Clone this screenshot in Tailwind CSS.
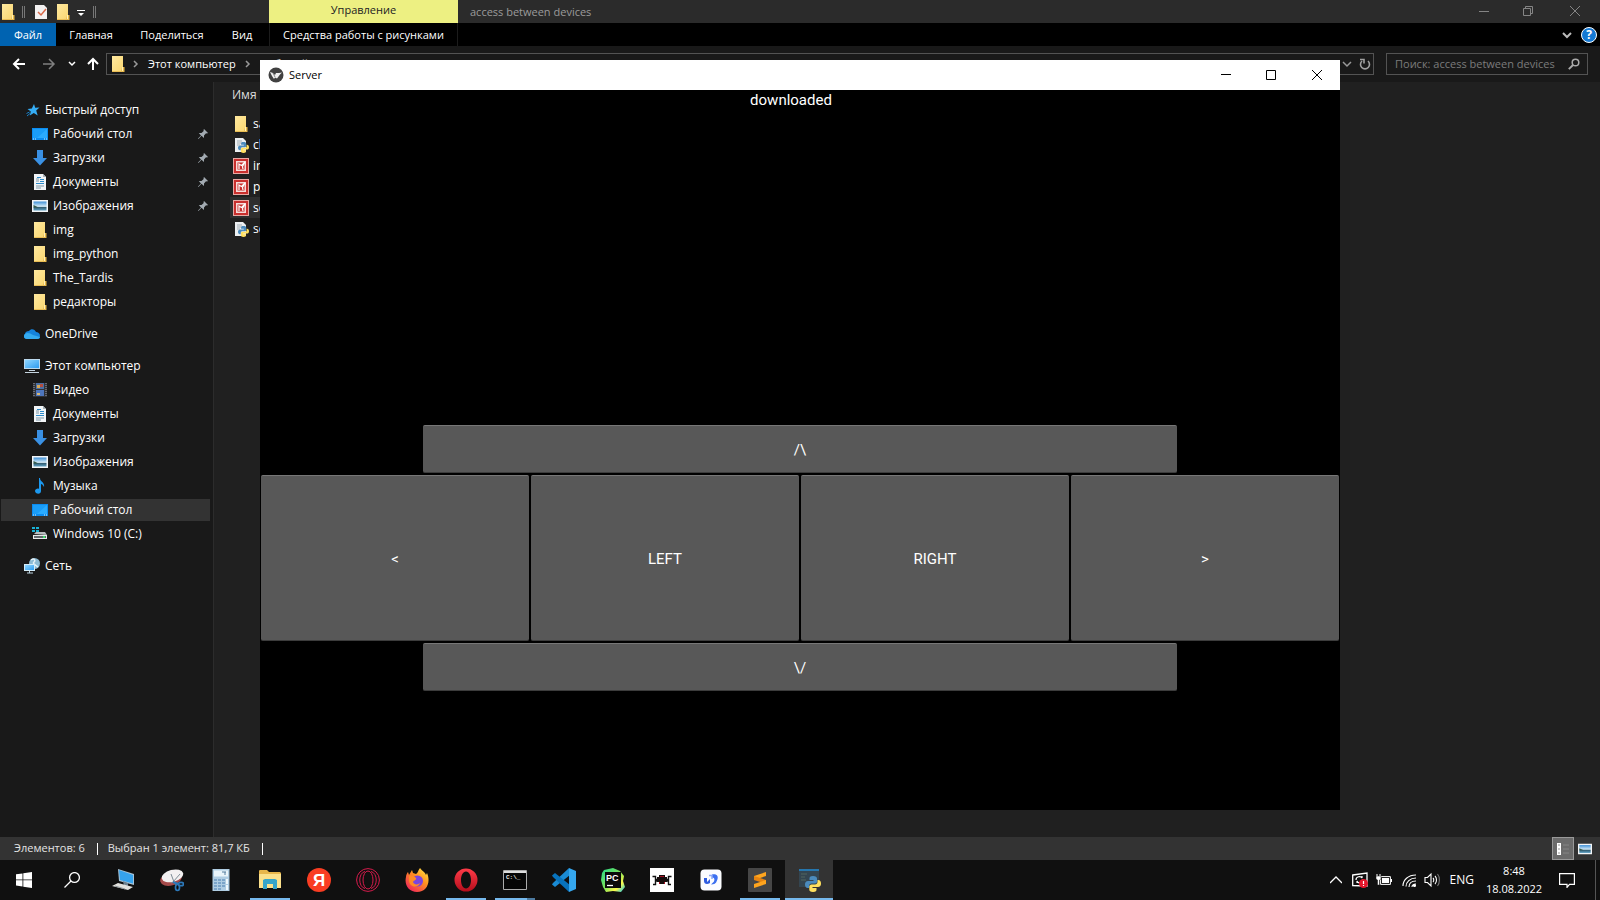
<!DOCTYPE html>
<html lang="ru">
<head>
<meta charset="utf-8">
<title>access between devices</title>
<script src="https://cdn.jsdelivr.net/npm/@tailwindcss/browser@4"></script>
</head>
<body class="relative flex h-screen flex-col overflow-hidden bg-[#202020] font-['Open_Sans','Noto_Sans',sans-serif] text-xs text-white">

<svg class="absolute h-0 w-0" aria-hidden="true">
  <defs>
    <linearGradient id="gFolder" x1="0" y1="0" x2="1" y2="1"><stop offset="0" stop-color="#ffe9a0"/><stop offset="1" stop-color="#f9d56d"/></linearGradient>
    <linearGradient id="gSky" x1="0" y1="0" x2="0" y2="1"><stop offset="0" stop-color="#3d8fd6"/><stop offset=".55" stop-color="#d6ecf8"/><stop offset=".6" stop-color="#2c5468"/><stop offset="1" stop-color="#5fa2c4"/></linearGradient>
    <linearGradient id="gScreen" x1="0" y1="0" x2="1" y2="1"><stop offset="0" stop-color="#8fd6ff"/><stop offset="1" stop-color="#2f9cf0"/></linearGradient>
    <linearGradient id="gFox" x1="1" y1="0" x2=".2" y2="1"><stop offset="0" stop-color="#fff04a"/><stop offset=".45" stop-color="#ff9320"/><stop offset="1" stop-color="#f0225c"/></linearGradient>
    <linearGradient id="gOpera" x1="0" y1="0" x2="0" y2="1"><stop offset="0" stop-color="#ff3b48"/><stop offset="1" stop-color="#b40e1c"/></linearGradient>
    <linearGradient id="gCharm" x1="0" y1="0" x2="1" y2="1"><stop offset="0" stop-color="#21d789"/><stop offset=".5" stop-color="#7fe35a"/><stop offset=".75" stop-color="#fcf84a"/><stop offset="1" stop-color="#07c3f2"/></linearGradient>
  </defs>
  <symbol id="folder" viewBox="0 0 16 16"><path d="M2 0h11v11h1v5H2z" fill="url(#gFolder)"/><path d="M12 11h2.500v5H11z" fill="#e9b94a"/><path d="M12 11h1v4h-1z" fill="#fff2bd"/><path d="M2 15h10v1H2z" fill="#e9bd55"/></symbol>
  <symbol id="star" viewBox="0 0 16 16"><path d="M9 2l1.200 3.800 4.300-.2-3.300 3 1.500 4.800-3.900-2.500L4.800 13.500l1-4L2.500 7l4.300-.5z" fill="#35adf5"/><path d="M1.500 11.500l3-1.500M2 14l3-2.500" stroke="#1780c8"/></symbol>
  <symbol id="desktop" viewBox="0 0 16 16"><path d="M0 2h16v12H0z" fill="#0b8cf0"/><path d="M1 3h14v9H1z" fill="#1a9df8"/><path d="M15 3v9H5z" fill="#2aabff"/><path d="M1 13h1m1 0h1m8 0h1m1 0h1" stroke="#d7efff"/></symbol>
  <symbol id="down" viewBox="0 0 16 16"><path d="M5 0h6v8h4l-7 7.500L1 8h4z" fill="#3a91e4"/></symbol>
  <symbol id="doc" viewBox="0 0 16 16"><path d="M2 0h9l3 3v13H2z" fill="#f2f5f7"/><path d="M11 0l3 3h-3z" fill="#a8b4bc"/><path d="M4 5h3M4 7h3M4 12h8M4 14h5" stroke="#7f98a8"/><path d="M5 3.500h4M8 5.500h4M8 7.500h4M4 9.500h8" stroke="#2e8bc9"/></symbol>
  <symbol id="image" viewBox="0 0 16 16"><path d="M0 2h16v12H0z" fill="#f3f5f7"/><path d="M1.500 3.500h13v9h-13z" fill="url(#gSky)"/><path d="M1.500 7l5 2.500H1.500z" fill="#375d4a"/></symbol>
  <symbol id="cloud" viewBox="0 0 16 16"><path d="M1 8c0-2 2-3 4-3 2-3 6-2 7 1 2 0 4 1 4 4 0 2-1 3-3 3H3C-1 13-1 9 1 8z" fill="#1583dc"/><path d="M1 8c2-2 5-1 8 1l7 2c0 1-1 2-3 2H3C0 13-1 10 1 8z" fill="#35abf0"/></symbol>
  <symbol id="pc" viewBox="0 0 16 16"><path d="M0 1h16v10H0z" fill="#bcd9ee"/><path d="M1 2h14v8H1z" fill="url(#gScreen)"/><path d="M5 12h6v1H5zM1 14h14v1H1z" fill="#c4d3de"/></symbol>
  <symbol id="film" viewBox="0 0 16 16"><path d="M1 1h14v14H1z" fill="#303238"/><path d="M2 1v14M14 1v14" stroke="#a1a1a8" stroke-dasharray="1 1"/><path d="M4 1h8v6H4z" fill="#496fa5"/><path d="M4 8h8v6H4z" fill="#4e76bd"/><path d="M5 3h3v3H5z" fill="#d7a652"/><path d="M8 2h3v3H8z" fill="#b34c3d"/><path d="M5 11h3v2H5z" fill="#d7b776"/></symbol>
  <symbol id="music" viewBox="0 0 16 16"><path d="M8 0c0 4 5 4 4 9-1-2-2-3-3-3v7c0 4-6 3-6 0 0-2 3-3 4-2V0z" fill="#1c98ee"/></symbol>
  <symbol id="drive" viewBox="0 0 16 16"><path d="M0 1h3v2H0zM4 1h3v2H4zM0 4h3v2H0zM4 4h3v2H4z" fill="#18b1d5"/><path d="M2 8l2-2h9l2 3z" fill="#b9bdbf"/><path d="M1 9h14v4H1z" fill="#e8eaeb"/><path d="M2 10h12v2H2z" fill="#62686c"/><path d="M11 10h2v2h-2z" fill="#3bdf6b"/></symbol>
  <symbol id="net" viewBox="0 0 16 16"><circle cx="10.500" cy="5.500" r="5.500" fill="#8dbbd4"/><path d="M7 2c3-2 5 0 3 2s2 3 4 5" fill="none" stroke="#e4f1f7" stroke-width="1.500"/><path d="M0 6h11v7H0z" fill="#d4edfa"/><path d="M1 7h9v5H1z" fill="url(#gScreen)"/><path d="M3 15h6M5.500 13v2" stroke="#bcd3e0"/></symbol>
  <symbol id="pin" viewBox="0 0 10 10"><path d="M6 0l4 4-1 .5-1-.2L6 6.500 6 9 3.500 6.800.5 10 0 9.500 3 6.500.8 4l2.700 0L5.700 2 5.500 1z" fill="#a3abb2"/></symbol>
  <symbol id="snake" viewBox="0 0 16 16"><path d="M8 0C5 0 4.500 1 4.500 2.500V4H8.500v1H3C1 5 0 6.500 0 8.500S1 12 2.700 12H4v-2c0-1.500 1-2.500 2.500-2.500H10c1.200 0 2-1 2-2v-3C12 1 10.800 0 8 0z" fill="#4b8bbd"/><path d="M8 16c3 0 3.500-1 3.500-2.500V12H7.500v-1H13c2 0 3-1.500 3-3.500S15 4 13.300 4H12.500v2c0 1.500-1 2.500-2.500 2.500H6.500c-1.200 0-2.200 1-2.200 2v3C4.300 15 5.200 16 8 16z" fill="#ffe05f"/></symbol>
  <symbol id="py" viewBox="0 0 16 16"><path d="M2 1h8l3 3v11H2z" fill="#eceff1"/><path d="M4 4h5M4 6h7M4 8h3" stroke="#a3afb7"/><use href="#snake" x="5" y="5" width="11" height="11"/></symbol>
  <symbol id="pic" viewBox="0 0 16 16"><path d="M0 0h16v16H0z" fill="#e9a8a3"/><path d="M1 1h14v14H1z" fill="#c9302e"/><path d="M3 3h10v10H3z" fill="#f6dcda"/><path d="M4.500 4.500h7v7h-7z" fill="#c9302e"/><path d="M6 11V6l2.500 1.500L12 4l-2.500 4.500L10 11" fill="none" stroke="#fff" stroke-width="1.200"/></symbol>
</svg>

<!-- Title bar -->
<header class="flex h-[23px] shrink-0 bg-[#2b2b2b] text-[11px]">
  <div class="flex w-[269px] items-center">
    <svg class="h-4 w-4"><use href="#folder"/></svg>
    <span class="ml-1.5 h-3 w-[3px] border-x border-[#777]"></span>
    <button class="ml-2.5" aria-label="Свойства"><svg class="h-4 w-3" viewBox="0 0 12 16"><path d="M0 1h9l3 3v11H0z" fill="#f3f1f1"/><path d="M3 8l3 3 5-6" fill="none" stroke="#d96a4b" stroke-width="1.500"/></svg></button>
    <button class="ml-2" aria-label="Новая папка"><svg class="h-4 w-4"><use href="#folder"/></svg></button>
    <button class="ml-1.5" aria-label="Настройка панели"><svg class="h-3 w-2" viewBox="0 0 8 12"><path d="M0 4.500h8" stroke="#fff"/><path d="M1 7h6L4 10z" fill="#fff"/></svg></button>
    <span class="ml-2 h-3 w-[3px] border-x border-[#777]"></span>
  </div>
  <div class="w-[189px] bg-[#edf082] text-center leading-5 text-[#222]">Управление</div>
  <div class="flex-1 pl-3 leading-6 text-[#9b9b9b]">access between devices</div>
  <div class="flex pb-0.5 text-[#858585]">
    <button class="grid w-11 place-items-center" aria-label="Свернуть"><svg class="h-2.5 w-2.5" viewBox="0 0 10 10"><path d="M0 5.500h10" stroke="currentColor"/></svg></button>
    <button class="grid w-11 place-items-center" aria-label="Развернуть"><svg class="h-2.5 w-2.5" viewBox="0 0 10 10" fill="none" stroke="currentColor"><path d="M.5 2.500h7v7h-7zM2.500 2V.5h7v7H8"/></svg></button>
    <button class="grid w-[50px] place-items-center" aria-label="Закрыть"><svg class="h-2.5 w-2.5" viewBox="0 0 10 10"><path d="M0 0l10 10M10 0L0 10" stroke="currentColor"/></svg></button>
  </div>
</header>

<!-- Ribbon tabs -->
<nav class="flex h-[23px] shrink-0 bg-black text-[11px] leading-6">
  <button class="w-14 bg-[#0063b1]">Файл</button>
  <button class="w-[70px]">Главная</button>
  <button class="w-[92px]">Поделиться</button>
  <button class="w-[48px]">Вид</button>
  <button class="ml-[3px] w-[189px] border-x border-[#1c1c1c]">Средства работы с рисунками</button>
  <div class="flex flex-1 items-center justify-end gap-2 pr-[3px]">
    <button aria-label="Свернуть ленту"><svg class="h-3 w-3" viewBox="0 0 12 12"><path d="M2 4l4 4 4-4" fill="none" stroke="#bbb" stroke-width="2"/></svg></button>
    <button class="grid h-4 w-4 place-items-center rounded-full border border-white bg-[#1479d4] text-xs leading-3 font-bold" aria-label="Справка">?</button>
  </div>
</nav>

<!-- Address row -->
<div class="flex h-9 shrink-0 items-center bg-[#191919] text-[11px]">
  <div class="flex w-[106px] items-center">
    <button class="ml-3" aria-label="Назад"><svg class="h-3.5 w-3.5" viewBox="0 0 14 14"><path d="M13 7H2M7 2L2 7l5 5" fill="none" stroke="#fff" stroke-width="2"/></svg></button>
    <button class="ml-4" aria-label="Вперёд"><svg class="h-3.5 w-3.5" viewBox="0 0 14 14"><path d="M1 7h11M7 2l5 5-5 5" fill="none" stroke="#808080" stroke-width="1.500"/></svg></button>
    <button class="ml-3" aria-label="Журнал"><svg class="h-2 w-2" viewBox="0 0 8 8"><path d="M1 2l3 3 3-3" fill="none" stroke="#fff" stroke-width="1.500"/></svg></button>
    <button class="ml-2.5" aria-label="Вверх"><svg class="h-3.5 w-3.5" viewBox="0 0 14 14"><path d="M7 13V2M2 7l5-5 5 5" fill="none" stroke="#fff" stroke-width="2"/></svg></button>
  </div>
  <div class="flex h-[22px] flex-1 items-center border border-[#535353]">
    <svg class="ml-[3px] h-4 w-4 shrink-0"><use href="#folder"/></svg>
    <svg class="ml-1.5 h-2 w-2" viewBox="0 0 8 8"><path d="M2 1l3 3-3 3" fill="none" stroke="#999" stroke-width="1.500"/></svg>
    <a href="#" class="ml-2 text-white">Этот компьютер</a>
    <svg class="ml-2 h-2 w-2" viewBox="0 0 8 8"><path d="M2 1l3 3-3 3" fill="none" stroke="#999" stroke-width="1.500"/></svg>
    <a href="#" class="ml-2.5">Рабочий стол</a>
    <svg class="ml-2 h-2 w-2" viewBox="0 0 8 8"><path d="M2 1l3 3-3 3" fill="none" stroke="#999" stroke-width="1.500"/></svg>
    <a href="#" class="ml-2">The_Tardis</a>
    <div class="ml-auto flex items-center gap-1.5 pr-0.5">
      <button aria-label="Список адресов"><svg class="h-3 w-3" viewBox="0 0 12 12"><path d="M2 4l4 4 4-4" fill="none" stroke="#999" stroke-width="1.500"/></svg></button>
      <button aria-label="Обновить"><svg class="h-3 w-3" viewBox="0 0 12 12"><path d="M9 3a4.500 4.500 0 1 1-6 0M1 1.500h4v4" fill="none" stroke="#a0a0a0" stroke-width="1.600"/></svg></button>
    </div>
  </div>
  <label class="mr-3 ml-3 flex h-[22px] w-[202px] items-center border border-[#535353] pl-2">
    <input type="search" aria-label="Поиск" placeholder="Поиск: access between devices" class="min-w-0 flex-1 bg-transparent outline-none placeholder:text-[#7c7c7c]">
    <svg class="mr-[7px] h-3 w-3" viewBox="0 0 12 12"><circle cx="7.500" cy="4.500" r="3.300" fill="none" stroke="#aaa" stroke-width="1.500"/><path d="M5 7L.8 11.200" stroke="#aaa" stroke-width="1.900"/></svg>
  </label>
</div>

<!-- Folder tree and file list -->
<main class="flex min-h-0 flex-1">
  <aside class="flex w-[214px] shrink-0 flex-col gap-2 border-r border-[#2c2c2c] bg-[#191919] pt-4">
    <ul>
      <li><a href="#" class="flex h-6 items-center gap-1 pl-[25px]"><svg class="h-4 w-4"><use href="#star"/></svg>Быстрый доступ</a></li>
      <li><a href="#" class="flex h-6 items-center gap-[5px] pl-8"><svg class="h-4 w-4"><use href="#desktop"/></svg>Рабочий стол<svg class="mr-[5px] ml-auto h-2.5 w-2.5"><use href="#pin"/></svg></a></li>
      <li><a href="#" class="flex h-6 items-center gap-[5px] pl-8"><svg class="h-4 w-4"><use href="#down"/></svg>Загрузки<svg class="mr-[5px] ml-auto h-2.5 w-2.5"><use href="#pin"/></svg></a></li>
      <li><a href="#" class="flex h-6 items-center gap-[5px] pl-8"><svg class="h-4 w-4"><use href="#doc"/></svg>Документы<svg class="mr-[5px] ml-auto h-2.5 w-2.5"><use href="#pin"/></svg></a></li>
      <li><a href="#" class="flex h-6 items-center gap-[5px] pl-8"><svg class="h-4 w-4"><use href="#image"/></svg>Изображения<svg class="mr-[5px] ml-auto h-2.5 w-2.5"><use href="#pin"/></svg></a></li>
      <li><a href="#" class="flex h-6 items-center gap-[5px] pl-8"><svg class="h-4 w-4"><use href="#folder"/></svg>img</a></li>
      <li><a href="#" class="flex h-6 items-center gap-[5px] pl-8"><svg class="h-4 w-4"><use href="#folder"/></svg>img_python</a></li>
      <li><a href="#" class="flex h-6 items-center gap-[5px] pl-8"><svg class="h-4 w-4"><use href="#folder"/></svg>The_Tardis</a></li>
      <li><a href="#" class="flex h-6 items-center gap-[5px] pl-8"><svg class="h-4 w-4"><use href="#folder"/></svg>редакторы</a></li>
    </ul>
    <a href="#" class="flex h-6 items-center gap-[5px] pl-6"><svg class="h-4 w-4"><use href="#cloud"/></svg>OneDrive</a>
    <ul>
      <li><a href="#" class="flex h-6 items-center gap-[5px] pl-6"><svg class="h-4 w-4"><use href="#pc"/></svg>Этот компьютер</a></li>
      <li><a href="#" class="flex h-6 items-center gap-[5px] pl-8"><svg class="h-4 w-4"><use href="#film"/></svg>Видео</a></li>
      <li><a href="#" class="flex h-6 items-center gap-[5px] pl-8"><svg class="h-4 w-4"><use href="#doc"/></svg>Документы</a></li>
      <li><a href="#" class="flex h-6 items-center gap-[5px] pl-8"><svg class="h-4 w-4"><use href="#down"/></svg>Загрузки</a></li>
      <li><a href="#" class="flex h-6 items-center gap-[5px] pl-8"><svg class="h-4 w-4"><use href="#image"/></svg>Изображения</a></li>
      <li><a href="#" class="flex h-6 items-center gap-[5px] pl-8"><svg class="h-4 w-4"><use href="#music"/></svg>Музыка</a></li>
      <li><a href="#" class="my-px mr-[3px] ml-px flex h-[22px] items-center gap-[5px] bg-[#333] pl-[31px]"><svg class="h-4 w-4"><use href="#desktop"/></svg>Рабочий стол</a></li>
      <li><a href="#" class="flex h-6 items-center gap-[5px] pl-8"><svg class="h-4 w-4"><use href="#drive"/></svg>Windows 10 (C:)</a></li>
    </ul>
    <a href="#" class="flex h-6 items-center gap-[5px] pl-6"><svg class="h-4 w-4"><use href="#net"/></svg>Сеть</a>
  </aside>
  <section class="flex-1 pl-4" aria-label="Файлы">
    <div class="h-[31px] pt-[5px] pl-0.5 leading-4 text-[#dedede]">Имя</div>
    <ul class="w-[640px]">
      <li class="flex h-[21px] items-center gap-1 pl-[3px]"><svg class="h-4 w-4"><use href="#folder"/></svg>sa</li>
      <li class="flex h-[21px] items-center gap-1 pl-[3px]"><svg class="h-4 w-4"><use href="#py"/></svg>cl</li>
      <li class="flex h-[21px] items-center gap-1 pl-[3px]"><svg class="h-4 w-4"><use href="#pic"/></svg>in</li>
      <li class="flex h-[21px] items-center gap-1 pl-[3px]"><svg class="h-4 w-4"><use href="#pic"/></svg>pr</li>
      <li class="flex h-[21px] items-center gap-1 bg-[#2e2e2e] pl-[3px]"><svg class="h-4 w-4"><use href="#pic"/></svg>se</li>
      <li class="flex h-[21px] items-center gap-1 pl-[3px]"><svg class="h-4 w-4"><use href="#py"/></svg>se</li>
    </ul>
  </section>
</main>

<!-- Status bar -->
<div class="flex h-[23px] shrink-0 items-center bg-[#333] pl-3.5 text-[11px] text-[#e4e4e4]">
  <span>Элементов: 6</span><span class="mr-2.5 ml-3 h-3 w-px bg-white"></span>
  <span>Выбран 1 элемент: 81,7 КБ</span><span class="mr-2.5 ml-3 h-3 w-px bg-white"></span>
  <button class="ml-auto grid h-[23px] w-[22px] place-items-center border border-[#999] bg-[#6b6b6b]" aria-label="Таблица"><svg class="h-3.5 w-4" viewBox="0 0 16 14"><path d="M2 1h4v12H2z" fill="#fff"/><path d="M3.500 2.500h1v1h-1zM3.500 6.500h1v1h-1zM3.500 10.500h1v1h-1z" fill="#333"/><path d="M8 3h6M8 7h6M8 11h6" stroke="#858585"/></svg></button>
  <button class="mr-2 ml-1" aria-label="Эскизы"><svg class="h-3.5 w-3.5"><use href="#image"/></svg></button>
</div>

<!-- Taskbar -->
<footer class="flex h-10 shrink-0 bg-[#101010]">
  <button class="grid w-12 place-items-center" aria-label="Пуск"><svg class="h-4 w-4" viewBox="0 0 16 16"><path d="M0 2.300L6.500 1.400v6.100H0zM7.300 1.300L16 0v7.500H7.300zM0 8.300h6.500v6.200L0 13.600zM7.300 8.300H16V16l-8.700-1.300z" fill="#fff"/></svg></button>
  <button class="mr-[3px] grid w-12 place-items-center" aria-label="Поиск"><svg class="h-4 w-4" viewBox="0 0 16 16" fill="none" stroke="#fff" stroke-width="1.300"><circle cx="10.500" cy="5.500" r="4.900"/><path d="M7 9L.5 15.500"/></svg></button>
  <div class="flex gap-px">
    <button class="grid w-12 place-items-center" aria-label="Компьютер"><svg class="h-6 w-6" viewBox="0 0 24 24"><path d="M7 1l16 5v11L8 13z" fill="#a7c3d6"/><path d="M8 2l14 5v8.500L9 12z" fill="#35a3ee"/><path d="M12 13l5 2v4l-4-1z" fill="#6f8290"/><path d="M1 18l6-3 15 4-5 3z" fill="#e3e3df"/><path d="M4 18l10 3" stroke="#90989c"/></svg></button>
    <button class="grid w-12 place-items-center" aria-label="Ножницы"><svg class="h-6 w-6" viewBox="0 0 24 24"><ellipse cx="11" cy="11" rx="11" ry="6.500" transform="rotate(-15 11 11)" fill="#a54a4a"/><ellipse cx="12.500" cy="8" rx="11" ry="6" transform="rotate(-15 12 8)" fill="#f2f0f1"/><path d="M11 6l3 8 2 4M20 6l-7 8-2 1" fill="none" stroke="#7c8c96"/><ellipse cx="17.500" cy="19.500" rx="2" ry="3" fill="none" stroke="#2c78b9" stroke-width="1.700"/><ellipse cx="21" cy="16" rx="2.500" ry="1.700" fill="none" stroke="#2c78b9" stroke-width="1.700"/><path d="M13 14l5 2" stroke="#2c78b9" stroke-width="2"/></svg></button>
    <button class="grid w-12 place-items-center" aria-label="Калькулятор"><svg class="h-6 w-6" viewBox="0 0 24 24"><path d="M3.500 1h17v22h-17z" fill="#afcde3"/><path d="M5 2.500h14v6H5z" fill="#e9f4fa"/><path d="M16 4v3M13 4h4" stroke="#547f9f"/><path d="M5 11h3v2H5zm4 0h3v2H9zm4 0h3v2h-3zM5 14h3v2H5zm4 0h3v2H9zm4 0h3v2h-3zM5 17h3v2H5zm4 0h3v2H9zm4 0h3v2h-3zM5 20h3v2H5zm4 0h3v2H9z" fill="#7ba4c9"/><path d="M17 11h2v5h-2zm0 6h2v5h-2z" fill="#eff8fd"/></svg></button>
    <button class="relative grid w-12 place-items-center" aria-label="Проводник"><svg class="h-6 w-6" viewBox="0 0 24 24"><path d="M1 3c0-1 1-1 1-1h7l2 2h11l1 1v15H1z" fill="#e8b64b"/><path d="M1 6h22v14H1z" fill="#fbe08b"/><path d="M5 21v-9l2-1h10l2 1v9h-4v-5H9v5z" fill="#35a4c9"/></svg><span class="absolute bottom-0 left-1 h-0.5 w-10 bg-[#76b9ed]"></span></button>
    <button class="grid w-12 place-items-center" aria-label="Яндекс"><svg class="h-6 w-6" viewBox="0 0 24 24"><circle cx="12" cy="12" r="12" fill="#f93d22"/><text x="12" y="18" text-anchor="middle" font-family="Liberation Sans, sans-serif" font-size="17" font-weight="bold" fill="#fff">Я</text></svg></button>
    <button class="grid w-12 place-items-center" aria-label="Opera GX"><svg class="h-6 w-6" viewBox="0 0 24 24" fill="none" stroke="#d51b4c"><circle cx="12" cy="12" r="11.400"/><ellipse cx="12" cy="12" rx="5" ry="9"/><path d="M9 3.500C2 5 2 19 9 20.500M15 3.500c7 1.500 7 15.500 0 17"/></svg></button>
    <button class="grid w-12 place-items-center" aria-label="Firefox"><svg class="h-6 w-6" viewBox="0 0 24 24"><path d="M15 0c2 3 5 4 6 7l1-2c4 9 0 19-10 19C4 24-1 17 1 9c0-2 1-4 2-5l1 3 3-5 1 3 3 1c2-1 2-4 4-6z" fill="url(#gFox)"/><circle cx="12.500" cy="13" r="5.500" fill="#7a45de"/><path d="M4 8c3-1 5 0 7 2 1 2-2 2-3 4 1 3 5 3 7 1-1 5-10 5-11-2z" fill="#ff8b25"/></svg></button>
    <button class="relative grid w-12 place-items-center" aria-label="Opera"><svg class="h-6 w-6" viewBox="0 0 24 24"><path fill-rule="evenodd" d="M12 .5a11.500 11.500 0 1 0 0 23 11.500 11.500 0 0 0 0-23zm0 3c3 0 5 4 5 8.500s-2 8.500-5 8.500-5-4-5-8.500 2-8.500 5-8.500z" fill="url(#gOpera)"/></svg><span class="absolute bottom-0 left-1 h-0.5 w-10 bg-[#76b9ed]"></span></button>
    <button class="relative grid w-12 place-items-center" aria-label="Командная строка"><svg class="h-6 w-6" viewBox="0 0 24 24"><path d="M.5 2.500h23v19H.5z" fill="#050505" stroke="#aaa"/><path d="M1 3h22v2H1z" fill="#ddd"/><text x="3" y="11" font-family="Liberation Mono, monospace" font-size="6" font-weight="bold" fill="#eee">C:\_</text></svg><span class="absolute bottom-0 left-1 flex h-0.5 w-10 bg-[#4d7ba1]"><span class="w-8 bg-[#76b9ed]"></span></span></button>
    <button class="grid w-12 place-items-center" aria-label="Visual Studio Code"><svg class="h-6 w-6" viewBox="0 0 24 24"><path d="M17 0L1 15l-1 1.500L3 19 18 7z" fill="#1a8bd4"/><path d="M17 24L1 9 0 7.500 3 5l15 12z" fill="#0873bd"/><path d="M17 0l7 3v18l-7 3z" fill="#35a7ef"/></svg></button>
    <button class="grid w-12 place-items-center" aria-label="PyCharm"><svg class="h-6 w-6" viewBox="0 0 24 24"><path d="M3 2l9-2 7 3 4 5-1 5 2 6-4 5-8-1-7 1-3-5L0 12l1-7z" fill="url(#gCharm)"/><path d="M4 4h16v16H4z" fill="#090909"/><text x="5" y="12.500" font-family="Liberation Sans, sans-serif" font-size="9" font-weight="bold" fill="#fff">PC</text><path d="M6 17.500h6" stroke="#fff" stroke-width="1.300"/></svg></button>
    <button class="grid w-12 place-items-center" aria-label="Паук"><svg class="h-6 w-6" viewBox="0 0 24 24"><path d="M0 0h24v24H0z" fill="#fff"/><path d="M9 7h6v2h2v5h-2v2H9v-2H7V9h2z" fill="#170c0c"/><path d="M2.500 8.500h3v3H8M21.500 8.500h-3v3H16M8 13H5.500v3.500H3M16 13h2.500v3.500H21" fill="none" stroke="#111" stroke-width="1.400"/><path d="M10 8h4v1h-4zM9 14h1v2H9zM14 14h1v2h-1z" fill="#a50f22"/></svg></button>
    <button class="grid w-12 place-items-center" aria-label="Приложение"><svg class="h-6 w-6" viewBox="0 0 24 24"><rect x="1.500" y="1.500" width="21" height="21" rx="4" fill="#fbfcff"/><path d="M5 10l3 0v4l3-3v4c-3 2-6 1-6-2z" fill="#305de0"/><path d="M13 6.500c5-1 7 2 5 6-1 3-3 4-6 4l3-3c1-3 0-4-2-4z" fill="#3b6ff0"/><path d="M10 7.500h3v3.500" fill="none" stroke="#8da9f8" stroke-width="1.500"/></svg></button>
    <button class="relative grid w-12 place-items-center" aria-label="Sublime Text"><svg class="h-6 w-6" viewBox="0 0 24 24"><rect width="24" height="24" rx="1" fill="#464646"/><path d="M18 4v4l-12 4V8z" fill="#ffa51e"/><path d="M6 8l12 4v4L6 12z" fill="#e88410"/><path d="M18 12v4L6 20v-4z" fill="#ffa51e"/></svg><span class="absolute bottom-0 left-1 h-0.5 w-10 bg-[#76b9ed]"></span></button>
    <button class="relative grid w-12 place-items-center bg-[#333]" aria-label="Python"><svg class="h-6 w-6" viewBox="0 0 24 24"><path d="M2 1h20v18H2z" fill="#344550"/><path d="M2 1h20v2H2z" fill="#2676ad"/><path d="M4 6h6M4 9h4M4 12h5" stroke="#50665e"/><use href="#snake" x="8" y="8" width="16" height="16"/></svg><span class="absolute inset-x-0 bottom-0 h-0.5 bg-[#76b9ed]"></span></button>
  </div>
  <div class="ml-auto flex items-center">
    <button aria-label="Скрытые значки"><svg class="h-3 w-3" viewBox="0 0 12 12"><path d="M0 9l6-6 6 6" fill="none" stroke="#fff" stroke-width="1.300"/></svg></button>
    <button class="ml-2.5" aria-label="Обновление"><svg class="h-4 w-4" viewBox="0 0 16 16"><path d="M.7 3L15 1v13L.7 13.500z" fill="none" stroke="#fff" stroke-width="1.300"/><path d="M4 8c0-4 5-4 6-2V4M11 7c0 4-5 5-6 2v2" fill="none" stroke="#fff" stroke-width="1.200"/><circle cx="11.500" cy="11.500" r="4.500" fill="#e5162b"/><path d="M11.500 9v3M11.500 13v1" stroke="#fff" stroke-width="1.200"/></svg></button>
    <button class="ml-2" aria-label="Батарея"><svg class="h-4 w-4" viewBox="0 0 16 16"><path d="M4.600 4.600h9.800v7.800H4.600z" fill="none" stroke="#fff"/><path d="M6 6h7v5H6zM15 7h1v3h-1z" fill="#fff"/><path d="M0 4h5v3L3.500 8v5h-2V8L0 7z" fill="#fff" stroke="#101010" stroke-width=".5"/><path d="M1 2v2M4 2v2" stroke="#fff"/></svg></button>
    <button class="ml-2.5" aria-label="Сеть"><svg class="h-4 w-4" viewBox="0 0 16 16" fill="none" stroke="#fff" stroke-width="1.100"><path d="M1 14C1 8 6 3 14 3M4 14.500C4 10 8 6 14 6M7 15c0-4 3-6 7-6M10 15c0-2 2-3 4-3"/><circle cx="12.500" cy="13.500" r="1" fill="#fff"/></svg></button>
    <button class="ml-1.5" aria-label="Громкость"><svg class="h-4 w-4" viewBox="0 0 16 16" fill="none" stroke="#fff" stroke-width="1.100"><path d="M1 5.500h2.500L7 2v12l-3.500-3.500H1zM9 6c1 1 1 3 0 4M11 4c2 2 2 6 0 8"/><path d="M13.500 2c2.500 3 2.500 9 0 12" stroke="#777"/></svg></button>
    <button class="ml-2.5">ENG</button>
    <button class="ml-2.5 w-[60px] text-center text-[11px] leading-[18px]">8:48<br>18.08.2022</button>
    <button class="ml-[15px]" aria-label="Уведомления"><svg class="h-4 w-4" viewBox="0 0 16 16"><path d="M.6 1.600h14.800v10.800h-4.900L8 15.400v-3H.6z" fill="none" stroke="#fff" stroke-width="1.200"/></svg></button>
    <button class="ml-5 h-10 w-[5px] border-l border-[#555]" aria-label="Показать рабочий стол"></button>
  </div>
</footer>

<!-- Server window, floating over the file manager -->
<section class="absolute top-[60px] left-[260px] flex w-[1080px] flex-col bg-black" aria-label="Server">
  <div class="flex h-[30px] items-center bg-white text-[11px] text-black">
    <svg class="ml-2 h-4 w-4" viewBox="0 0 16 16"><circle cx="8" cy="8" r="7.500" fill="#414141"/><path d="M2 5l3 1 2 2 1-2h3l3-.5-2 2-3 4-2-1-1 1.500-2-3z" fill="#f0f0f0"/><path d="M5 6l2 4" stroke="#414141" stroke-width=".6"/></svg>
    <span class="ml-[5px]">Server</span>
    <button class="ml-auto grid h-full w-[45px] place-items-center" aria-label="Свернуть"><svg class="h-2.5 w-2.5" viewBox="0 0 10 10"><path d="M0 4.500h10" stroke="#000"/></svg></button>
    <button class="grid h-full w-[45px] place-items-center" aria-label="Развернуть"><svg class="h-2.5 w-2.5" viewBox="0 0 10 10"><path d="M.5.5h9v9h-9z" fill="none" stroke="#000"/></svg></button>
    <button class="grid h-full w-[47px] place-items-center" aria-label="Закрыть"><svg class="h-2.5 w-2.5" viewBox="0 0 10 10"><path d="M0 0l10 10M10 0L0 10" stroke="#000"/></svg></button>
  </div>
  <div class="flex h-[720px] flex-col items-center font-[Roboto,sans-serif] text-[15px]">
    <p class="h-[335px] pr-[18px] leading-5">downloaded</p>
    <div class="flex w-full flex-col items-center gap-0.5">
      <button class="h-12 w-[754px] rounded-xs border-t border-b border-t-[#777] border-b-[#3c3c3c] bg-[#585858] pt-1">/\</button>
      <div class="grid w-full grid-cols-4 gap-0.5 px-px">
        <button class="h-[166px] rounded-xs border-t border-b border-t-[#777] border-b-[#3c3c3c] bg-[#585858] pt-1">&lt;</button>
        <button class="h-[166px] rounded-xs border-t border-b border-t-[#777] border-b-[#3c3c3c] bg-[#585858] pt-1">LEFT</button>
        <button class="h-[166px] rounded-xs border-t border-b border-t-[#777] border-b-[#3c3c3c] bg-[#585858] pt-1">RIGHT</button>
        <button class="h-[166px] rounded-xs border-t border-b border-t-[#777] border-b-[#3c3c3c] bg-[#585858] pt-1">&gt;</button>
      </div>
      <button class="h-12 w-[754px] rounded-xs border-t border-b border-t-[#777] border-b-[#3c3c3c] bg-[#585858] pt-1">\/</button>
    </div>
  </div>
</section>
</body>
</html>
